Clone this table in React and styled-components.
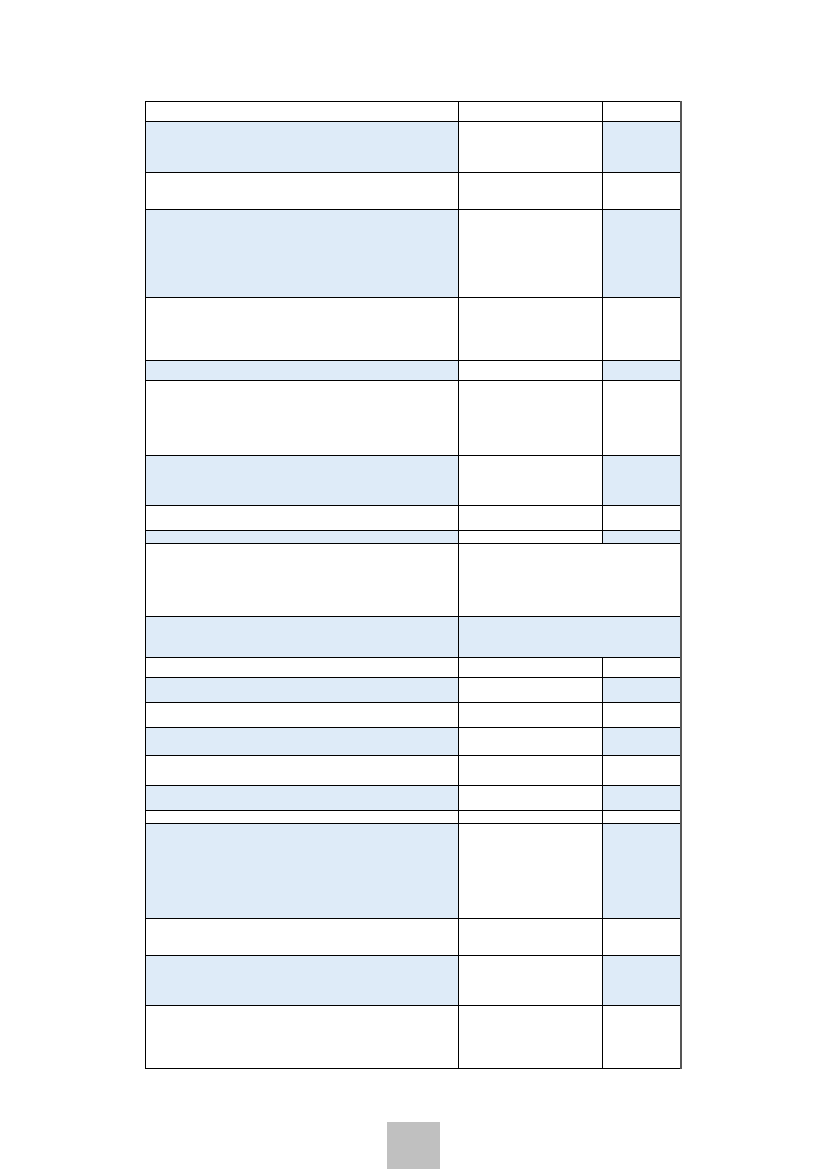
import React from "react";
import styled, { createGlobalStyle } from "styled-components";

const Global = createGlobalStyle`
  html, body { margin: 0; padding: 0; background: #fff; }
  body { font-family: "Liberation Sans", Arial, sans-serif; }
`;

const Page = styled.div`
  width: 827px;
  height: 1169px;
  overflow: hidden;
  display: flex;
  flex-direction: column;
  align-items: flex-start;
  padding-top: 101px;
  padding-left: 145px;
  box-sizing: border-box;
`;

const Grid = styled.div`
  display: grid;
  grid-template-columns: 312px 143px 77px;
  gap: 1px;
  padding: 1px 2px 1px 1px;
  background: #000;
  box-shadow: inset -2px 0 0 #555;
`;

const Cell = styled.div`
  height: ${(p) => p.$h}px;
  background: ${(p) => (p.$blue ? "#deebf8" : "#ffffff")};
  grid-column: ${(p) => (p.$span ? "span 2" : "auto")};
`;

const PageNumber = styled.div`
  margin-top: 53px;
  margin-left: 242px;
  width: 53px;
  height: 60px;
  background: #c0c0c0;
  flex-shrink: 0;
`;

const rows = [
  { h: 19, blue: false },
  { h: 50, blue: true },
  { h: 36, blue: false },
  { h: 87, blue: true },
  { h: 62, blue: false },
  { h: 19, blue: true },
  { h: 74, blue: false },
  { h: 49, blue: true },
  { h: 24, blue: false },
  { h: 12, blue: true },
  { h: 72, blue: false, merged: true },
  { h: 40, blue: true, merged: true },
  { h: 19, blue: false },
  { h: 24, blue: true },
  { h: 24, blue: false },
  { h: 27, blue: true },
  { h: 29, blue: false },
  { h: 24, blue: true },
  { h: 12, blue: false },
  { h: 94, blue: true },
  { h: 36, blue: false },
  { h: 49, blue: true },
  { h: 62, blue: false },
];

export default function App() {
  return (
    <>
      <Global />
      <Page>
        <Grid>
          {rows.map((r, i) =>
            r.merged ? (
              <React.Fragment key={i}>
                <Cell $h={r.h} $blue={r.blue} />
                <Cell $h={r.h} $blue={r.blue} $span />
              </React.Fragment>
            ) : (
              <React.Fragment key={i}>
                <Cell $h={r.h} $blue={r.blue} />
                <Cell $h={r.h} $blue={false} />
                <Cell $h={r.h} $blue={r.blue} />
              </React.Fragment>
            )
          )}
        </Grid>
        <PageNumber />
      </Page>
    </>
  );
}
